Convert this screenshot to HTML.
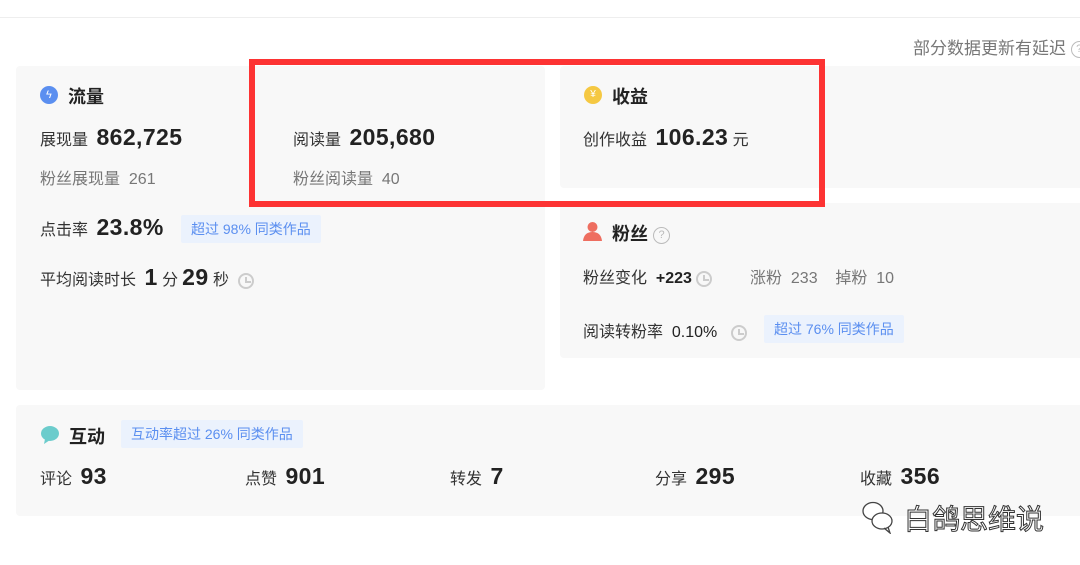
<!DOCTYPE html>
<html><head><meta charset="utf-8"><style>
*{margin:0;padding:0;box-sizing:border-box}
body{width:1080px;height:565px;background:#fff;position:relative;overflow:hidden;font-family:"Liberation Sans","Noto Sans CJK SC",sans-serif;color:#222}
.a{position:absolute;white-space:nowrap}
.card{position:absolute;background:#f8f8f8;border-radius:4px}
.l{font-size:16px;color:#333}
.g{font-size:16px;color:#777}
.n{font-size:23px;color:#222;font-weight:600;letter-spacing:0.4px;margin-left:4px}
.t{font-size:18px;font-weight:bold;color:#222}
.badge{position:absolute;background:#ebf2fd;color:#5b8ff0;font-size:14px;line-height:28px;padding:0 10px;border-radius:2px}
.clk{display:inline-block;width:16px;height:16px;border:2px solid #ccc;border-radius:50%;vertical-align:middle;position:relative}
.clk:after{content:"";position:absolute;left:5px;top:2px;width:4px;height:4px;border-left:2px solid #ccc;border-bottom:2px solid #ccc}
.q{display:inline-block;width:17px;height:17px;border:1.5px solid #bbb;border-radius:50%;color:#bbb;font-size:11px;text-align:center;line-height:14px;vertical-align:middle}
</style></head><body>
<div class="a" style="left:0;top:17px;width:1080px;height:1px;background:#eee"></div>
<div class="a" style="left:913px;top:34px;font-size:17px;color:#777">部分数据更新有延迟 <span class="q">?</span></div>

<div class="card" style="left:16px;top:66px;width:529px;height:324px"></div>
<div class="card" style="left:560px;top:66px;width:530px;height:122px"></div>
<div class="card" style="left:560px;top:203px;width:530px;height:155px"></div>
<div class="card" style="left:16px;top:405px;width:1074px;height:111px"></div>

<div class="a" style="left:40px;top:86px;width:18px;height:18px;border-radius:50%;background:#5b8ff0"></div>
<div class="a" style="left:46px;top:89px;color:#fff;font-size:11px">ϟ</div>
<div class="a t" style="left:68px;top:83px">流量</div>
<div class="a" style="left:40px;top:124px"><span class="l">展现量</span> <span class="n">862,725</span></div>
<div class="a g" style="left:40px;top:165px">粉丝展现量 &nbsp;261</div>
<div class="a" style="left:40px;top:214px"><span class="l">点击率</span> <span class="n">23.8%</span></div>
<div class="badge" style="left:181px;top:215px">超过 98% 同类作品</div>
<div class="a" style="left:40px;top:264px"><span class="l">平均阅读时长</span> <span class="n">1</span> <span class="l">分</span><span class="n">29</span> <span class="l">秒</span> &nbsp;<span class="clk"></span></div>

<div class="a" style="left:293px;top:124px"><span class="l">阅读量</span> <span class="n">205,680</span></div>
<div class="a g" style="left:293px;top:165px">粉丝阅读量 &nbsp;40</div>

<div class="a" style="left:584px;top:86px;width:18px;height:18px;border-radius:50%;background:#f5c842;color:#fff;font-size:10px;text-align:center;line-height:18px">¥</div>
<div class="a t" style="left:612px;top:83px">收益</div>
<div class="a" style="left:583px;top:124px"><span class="l">创作收益</span> <span class="n">106.23</span> <span class="l">元</span></div>

<svg class="a" style="left:583px;top:221px" width="19" height="20"><circle cx="9.5" cy="6" r="5" fill="#ee6e60"/><path d="M0 20 Q1 11 9.5 11 Q18 11 19 20Z" fill="#ee6e60"/></svg>
<div class="a t" style="left:612px;top:220px">粉丝 <span class="q" style="font-weight:normal">?</span></div>
<div class="a" style="left:583px;top:264px"><span class="l">粉丝变化</span> &nbsp;<span style="font-size:16px;font-weight:600">+223</span> <span class="clk"></span></div>
<div class="a g" style="left:750px;top:264px">涨粉 &nbsp;233 &nbsp;&nbsp;&nbsp;掉粉 &nbsp;10</div>
<div class="a" style="left:583px;top:318px"><span class="l">阅读转粉率</span> &nbsp;<span style="font-size:16px;font-weight:500">0.10%</span> &nbsp;&nbsp;<span class="clk"></span></div>
<div class="badge" style="left:764px;top:315px">超过 76% 同类作品</div>

<svg class="a" style="left:40px;top:425px" width="20" height="20"><ellipse cx="10" cy="8.5" rx="9" ry="7.5" fill="#6ccccc"/><path d="M5 14 L4 19 L10 15Z" fill="#6ccccc"/></svg>
<div class="a t" style="left:69px;top:423px">互动</div>
<div class="badge" style="left:121px;top:420px">互动率超过 26% 同类作品</div>
<div class="a" style="left:40px;top:463px"><span class="l">评论</span> <span class="n">93</span></div>
<div class="a" style="left:245px;top:463px"><span class="l">点赞</span> <span class="n">901</span></div>
<div class="a" style="left:450px;top:463px"><span class="l">转发</span> <span class="n">7</span></div>
<div class="a" style="left:655px;top:463px"><span class="l">分享</span> <span class="n">295</span></div>
<div class="a" style="left:860px;top:463px"><span class="l">收藏</span> <span class="n">356</span></div>

<svg class="a" style="left:862px;top:500px" width="32" height="34" fill="none" stroke="#444" stroke-width="1.3"><ellipse cx="11" cy="11" rx="10" ry="8.5" fill="#fff"/><ellipse cx="20" cy="21" rx="10" ry="8" fill="#fff"/><path d="M26 27 L28 33 L22 28"/></svg>
<div class="a" style="left:904px;top:498px;font-size:28px;color:#fff;-webkit-text-stroke:1px #333">白鸽思维说</div>

<div class="a" style="left:249px;top:59px;width:576px;height:148px;border:6px solid #fd3333"></div>
</body></html>
